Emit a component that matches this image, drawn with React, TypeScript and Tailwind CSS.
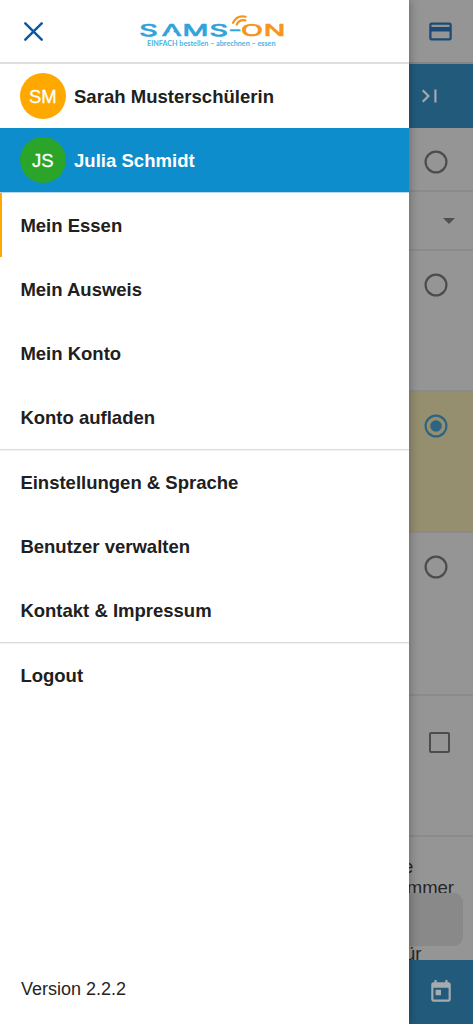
import type { ReactNode } from "react";

function Divider() {
  return <div className="h-0.5 shrink-0 border-t border-[#dcdcdc] bg-[#f3f3f3]" />;
}

function MenuItem({ children, active = false }: { children: ReactNode; active?: boolean }) {
  return (
    <a
      className={`flex h-16 shrink-0 items-center border-l-2 pt-0.5 pl-[18.400px] text-[18.500px] font-bold text-[#202020] ${
        active ? "border-[#ffa800]" : "border-transparent"
      }`}
    >
      {children}
    </a>
  );
}

function UserRow({ initials, name, selected = false }: { initials: string; name: string; selected?: boolean }) {
  return (
    <div
      className={`flex h-16 shrink-0 items-center gap-[8.400px] pl-5 ${
        selected ? "bg-[#0d8dcc] text-white" : "bg-white text-[#202020]"
      }`}
    >
      <div
        className={`flex size-[45.600px] items-center justify-center rounded-full pt-0.5 text-[18.500px] text-white [-webkit-text-stroke:0.3px_white] ${
          selected ? "bg-[#2aa52a]" : "bg-[#ffa800]"
        }`}
      >
        {initials}
      </div>
      <span className="pt-0.5 text-[18.500px] font-bold tracking-[0.030px]">{name}</span>
    </div>
  );
}

function Logo() {
  return (
    <svg width="150" height="34" viewBox="0 0 150 34" className="shrink-0">
      <g
        fontFamily="Inter, sans-serif"
        fontWeight="400"
        fontSize="15.500"
        textAnchor="middle"
        strokeWidth="0.700"
        transform="scale(1.85 1)"
      >
        <text x="6.200 18.700 31.600 44.200 53" y="22 22 22 22 21.500" fill="#31a3dc" stroke="#31a3dc">SAMS-</text>
        <text x="62.200 74.400" y="22" fill="#f7941d" stroke="#f7941d">ON</text>
      </g>
      <path d="M34.600 14.800L30 21h9.200z" fill="white" />
      <path
        d="M96 8.800C98.300 4.100 103 1.500 108.500 2.700M99.800 10.500C101.300 7.300 104.500 5.600 108.300 6.400"
        fill="none"
        stroke="#f7941d"
        strokeWidth="2.200"
        strokeLinecap="round"
      />
      <text x="10" y="32.200" fontFamily="Lato, sans-serif" fontSize="6.900" fontWeight="700" textLength="128.500" lengthAdjust="spacingAndGlyphs" fill="#4db3e3">
        EINFACH bestellen – abrechnen – essen
      </text>
    </svg>
  );
}

function Radio({ checked = false }: { checked?: boolean }) {
  return (
    <svg
      width="24"
      height="24"
      viewBox="0 0 24 24"
      fill="none"
      strokeWidth="2.200"
      className={checked ? "stroke-[#2d6483]" : "stroke-[#4c4c4c]"}
    >
      <circle cx="12" cy="12" r="10.400" />
      {checked && <circle cx="12" cy="12" r="5.800" fill="#2d6483" stroke="none" />}
    </svg>
  );
}

function OrderPage() {
  return (
    <main className="ml-[408px] flex h-full w-[65px] flex-col bg-[#959595]">
      <header className="flex h-16 shrink-0 items-center border-b-2 border-[#858585] pl-[19px]">
        <svg width="27" height="27" viewBox="0 0 24 24" fill="#1d4a75">
          <path d="M20 4H4c-1.110 0-1.990.89-1.990 2L2 18c0 1.110.89 2 2 2h16c1.110 0 2-.89 2-2V6c0-1.110-.89-2-2-2zm0 14H4v-6h16v6zm0-10H4V6h16v2z" />
        </svg>
      </header>
      <div className="flex h-16 shrink-0 items-center bg-[#225a7c] pl-[9px]">
        <svg width="26" height="26" viewBox="0 0 24 24" fill="#a3a9ad">
          <path d="M4.590 7.410 9.180 12l-4.590 4.590L6 18l6-6-6-6zM16 6h2v12h-2z" />
        </svg>
      </div>
      <div className="flex h-16 shrink-0 items-center border-b-2 border-[#8b8b8b] pt-1.5 pl-4">
        <Radio />
      </div>
      <div className="flex h-[59px] shrink-0 items-center justify-end border-b-2 border-[#8b8b8b] pr-[18px]">
        <div className="h-0 w-0 border-x-[6px] border-t-[6px] border-x-transparent border-t-[#505050]" />
      </div>
      <div className="h-[141px] shrink-0 border-b-2 border-[#8b8b8b] pt-[22px] pl-4">
        <Radio />
      </div>
      <div className="h-[141px] shrink-0 border-b-2 border-[#8b8b8b] bg-[#958f70] pt-[22px] pl-4">
        <Radio checked />
      </div>
      <div className="h-[163px] shrink-0 border-b-2 border-[#8b8b8b] pt-[22px] pl-4">
        <Radio />
      </div>
      <div className="h-[141px] shrink-0 border-b-2 border-[#8b8b8b] pt-9 pl-[21px]">
        <div className="size-[21px] rounded-[2px] border-2 border-[#4c4c4c]" />
      </div>
      <div className="flex h-[123px] shrink-0 flex-col overflow-hidden pt-[19px] text-[18.500px] leading-[21px] text-[#262626]">
        <div className="-ml-[5px] h-[21px] shrink-0">e</div>
        <div className="flex h-4 shrink-0 justify-end overflow-hidden pr-[19px]">mmer</div>
        <div className="mr-[10px] h-[53px] shrink-0 rounded-r-[9px] bg-[#898989]" />
        <div className="-mt-[3px] -ml-[3px] h-[21px] shrink-0">ür</div>
      </div>
      <footer className="flex h-16 shrink-0 items-center bg-[#225a7c] pl-5">
        <svg width="26" height="26" viewBox="0 0 24 24" fill="#a5acb0">
          <path d="M19 3h-1V1h-2v2H8V1H6v2H5c-1.110 0-1.990.9-1.990 2L3 19c0 1.100.89 2 2 2h14c1.100 0 2-.9 2-2V5c0-1.100-.9-2-2-2zm0 16H5V8h14v11zM7 10h5v5H7z" />
        </svg>
      </footer>
    </main>
  );
}

export default function App() {
  return (
    <div className="relative h-[1024px] w-[473px] overflow-hidden font-['Liberation_Sans',Arial,sans-serif]">
      <OrderPage />
      <aside className="absolute inset-y-0 left-0 flex w-[409px] flex-col bg-white shadow-[0_0_10px_rgba(0,0,0,0.35)]">
        <header className="flex h-16 shrink-0 border-b-2 border-[#dedede] pl-6">
          <svg width="19" height="19" viewBox="0 0 19 19" className="mt-[22px] shrink-0" fill="none" stroke="#0759a4" strokeWidth="2.400" strokeLinecap="round">
            <path d="M1.300 1.300l16.400 16.400M17.700 1.300L1.300 17.700" />
          </svg>
          <div className="mt-[14px] ml-[94px]">
            <Logo />
          </div>
        </header>
        <UserRow initials="SM" name="Sarah Musterschülerin" />
        <UserRow initials="JS" name="Julia Schmidt" selected />
        <div className="h-px shrink-0 bg-[#b5d7e9]" />
        <nav className="flex flex-col">
          <MenuItem active>Mein Essen</MenuItem>
          <MenuItem>Mein Ausweis</MenuItem>
          <MenuItem>Mein Konto</MenuItem>
          <MenuItem>Konto aufladen</MenuItem>
          <Divider />
          <div className="-mt-px">
            <MenuItem>Einstellungen &amp; Sprache</MenuItem>
            <MenuItem>Benutzer verwalten</MenuItem>
            <MenuItem>Kontakt &amp; Impressum</MenuItem>
          </div>
          <Divider />
          <div className="-mt-px">
            <MenuItem>Logout</MenuItem>
          </div>
        </nav>
        <footer className="mt-auto mb-[23px] pl-[21px] text-[18px] leading-6 text-[#252525]">
          Version 2.2.2
        </footer>
      </aside>
    </div>
  );
}
